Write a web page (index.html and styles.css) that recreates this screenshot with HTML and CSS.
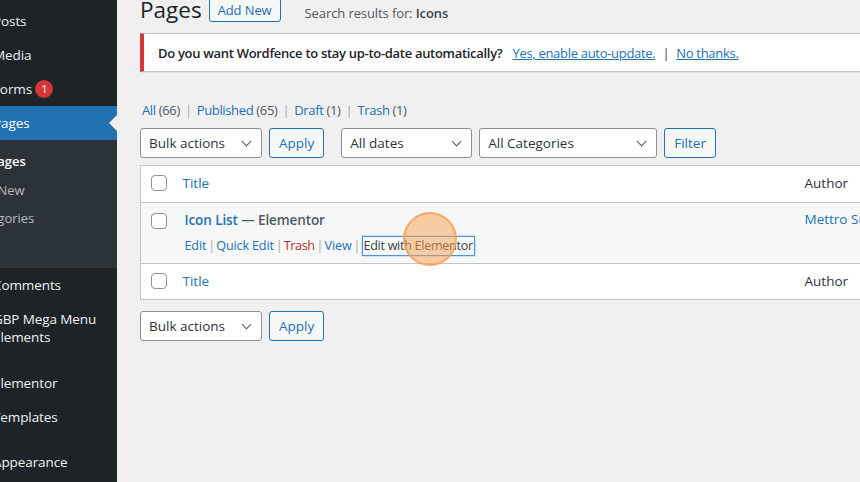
FILE: index.html
```html
<!DOCTYPE html>
<html>
<head>
    <meta charset="UTF-8">
    <title>Pages</title>
    <link rel="stylesheet" href="styles.css">
</head>
<body>
    <div id="adminMenu">
        <ul class="menu">
            <li class="item">Posts</li>
            <li class="item">Media</li>
            <li class="item">Forms <span class="badge">1</span></li>
            <li class="item current">Pages<span class="arrow"></span></li>
        </ul>
        <ul class="submenu">
            <li class="active">All Pages</li>
            <li>Add New</li>
            <li>Categories</li>
        </ul>
        <ul class="menu">
            <li class="item">Comments</li>
            <li class="item tall">GBP Mega Menu<br>Elements</li>
            <li class="sep"></li>
            <li class="item">Elementor</li>
            <li class="item">Templates</li>
            <li class="sep"></li>
            <li class="item">Appearance</li>
        </ul>
    </div>

    <div id="content">
        <div class="header">
            <h1>Pages</h1>
            <a class="addNew">Add New</a>
            <span class="searchInfo">Search results for: <b>Icons</b></span>
        </div>

        <div class="notice">
            <span class="noticeText">Do you want Wordfence to stay up-to-date automatically?</span>
            <a class="link">Yes, enable auto-update.</a>
            <span class="pipe">|</span>
            <a class="link">No thanks.</a>
        </div>

        <ul class="subsubsub">
            <li><a>All</a> <span class="count">(66)</span></li>
            <li class="div">|</li>
            <li><a>Published</a> <span class="count">(65)</span></li>
            <li class="div">|</li>
            <li><a>Draft</a> <span class="count">(1)</span></li>
            <li class="div">|</li>
            <li><a>Trash</a> <span class="count">(1)</span></li>
        </ul>

        <div class="tablenav">
            <div class="select w-bulk">Bulk actions</div>
            <button class="btn">Apply</button>
            <div class="select w-dates gapLeft">All dates</div>
            <div class="select w-cats">All Categories</div>
            <button class="btn">Filter</button>
        </div>

        <table class="list">
            <colgroup>
                <col class="c-cb">
                <col class="c-title">
                <col class="c-author">
            </colgroup>
            <tr class="head">
                <td class="cb"><span class="check"></span></td>
                <td class="title"><a>Title</a></td>
                <td class="author">Author</td>
            </tr>
            <tr class="row">
                <td class="cb"><span class="check"></span></td>
                <td class="title">
                    <div class="rowTitle"><a>Icon List</a> — Elementor</div>
                    <div class="actions">
                        <a>Edit</a><span class="bar">|</span>
                        <a>Quick Edit</a><span class="bar">|</span>
                        <a class="trash">Trash</a><span class="bar">|</span>
                        <a>View</a><span class="bar">|</span>
                        <a class="focus">Edit with Elementor</a>
                    </div>
                </td>
                <td class="author"><a>Mettro Support</a></td>
            </tr>
            <tr class="head foot">
                <td class="cb"><span class="check"></span></td>
                <td class="title"><a>Title</a></td>
                <td class="author">Author</td>
            </tr>
        </table>

        <div class="tablenav bottom">
            <div class="select w-bulk">Bulk actions</div>
            <button class="btn">Apply</button>
        </div>
    </div>

    <div class="clickMark"></div>
</body>
</html>
```

FILE: styles.css
```css
*{
    box-sizing: border-box;
    font-family: "Open Sans", "Noto Sans", sans-serif;
}
body{
    margin: 0;
    width: 860px;
    height: 482px;
    overflow: hidden;
    display: flex;
    background: #f0f0f1;
    color: #3c434a;
    font-size: 13px;
    position: relative;
}
ul{
    margin: 0;
    padding: 0;
    list-style: none;
}
a{
    color: #2271b1;
}

/* admin menu */
#adminMenu{
    width: 117px;
    flex-shrink: 0;
    background: #1d2327;
    overflow: hidden;
    padding-top: 4px;
}
.menu .item{
    position: relative;
    height: 34px;
    line-height: 34px;
    margin-left: -7px;
    color: #f0f0f1;
    font-size: 13.5px;
    letter-spacing: -0.1px;
    white-space: nowrap;
}
.menu .item.tall{
    height: 53px;
    line-height: 18px;
    padding-top: 8px;
}
.menu .sep{
    height: 11px;
}
.menu .current{
    background: #2271b1;
    color: #fff;
    margin-left: 0;
    text-indent: -7px;
}
.arrow{
    position: absolute;
    right: 0;
    top: 9px;
    border-right: 8px solid #f0f0f1;
    border-top: 8px solid transparent;
    border-bottom: 8px solid transparent;
}
.badge{
    display: inline-block;
    width: 18px;
    height: 18px;
    border-radius: 50%;
    background: #d63638;
    color: #fff;
    font-size: 11px;
    line-height: 18px;
    text-align: center;
    text-indent: 0;
    vertical-align: 1px;
}
.submenu{
    background: #2c3338;
    padding: 7px 0;
    height: 128px;
}
.submenu li{
    height: 28.5px;
    line-height: 28px;
    margin-left: -30px;
    color: rgba(240, 246, 252, 0.7);
    font-size: 13px;
    white-space: nowrap;
}
.submenu li.active{
    color: #fff;
    font-weight: 600;
}

/* content */
#content{
    flex: 1;
    padding-left: 23px;
    min-width: 0;
}
.header{
    display: flex;
    align-items: center;
    height: 24px;
    margin-top: -2px;
}
h1{
    margin: 0;
    font-size: 22.5px;
    font-weight: 400;
    color: #1d2327;
    line-height: 24px;
}
.addNew{
    margin-left: 7px;
    border: 1px solid #2271b1;
    border-radius: 3px;
    background: #f6f7f7;
    padding: 0 8px;
    height: 24px;
    line-height: 22px;
    font-size: 13px;
    font-weight: 500;
    letter-spacing: -0.1px;
}
.searchInfo{
    margin-left: 24px;
    margin-top: 5px;
    color: #50575e;
    font-size: 13px;
    letter-spacing: -0.1px;
}
.searchInfo b{
    color: #3c434a;
    font-weight: 600;
}

.notice{
    margin-top: 11px;
    height: 39px;
    width: 740px;
    background: #fff;
    border: 1px solid #c3c4c7;
    border-left: 4px solid #d63638;
    box-shadow: 0 1px 1px rgba(0, 0, 0, 0.04);
    display: flex;
    align-items: center;
    padding-left: 14px;
    font-size: 13px;
    letter-spacing: -0.3px;
}
.noticeText{
    font-weight: 600;
    color: #1d2327;
}
.notice .link{
    margin-left: 10px;
    text-decoration: underline;
}
.notice .pipe{
    margin-left: 7px;
    margin-right: -3px;
    color: #3c434a;
}

.subsubsub{
    display: flex;
    margin-top: 28px;
    padding-left: 2px;
    font-size: 13px;
    letter-spacing: -0.35px;
    color: #646970;
    height: 20px;
    line-height: 20px;
}
.subsubsub .div{
    margin: 0 5px;
    color: #a7aaad;
}
.count{
    color: #50575e;
}

.tablenav{
    display: flex;
    align-items: center;
    margin-top: 8px;
    height: 30px;
}
.tablenav.bottom{
    margin-top: 11px;
}
.select{
    height: 30px;
    border: 1px solid #8c8f94;
    border-radius: 3px;
    background: #fff;
    color: #2c3338;
    font-size: 13.5px;
    line-height: 28px;
    padding-left: 8px;
    position: relative;
    margin-right: 7px;
}
.select::after{
    content: "";
    position: absolute;
    right: 11px;
    top: 9px;
    width: 6px;
    height: 6px;
    border-right: 1.5px solid #50575e;
    border-bottom: 1.5px solid #50575e;
    transform: rotate(45deg);
}
.w-bulk{ width: 122px; }
.w-dates{ width: 131px; }
.w-cats{ width: 178px; }
.gapLeft{ margin-left: 10px; }
.btn{
    height: 30px;
    border: 1px solid #2271b1;
    border-radius: 3px;
    background: #f6f7f7;
    color: #2271b1;
    font-size: 13.5px;
    padding: 0 9px;
}
.tablenav .btn{
    margin-right: 7px;
}

.list{
    margin-top: 7px;
    width: 920px;
    table-layout: fixed;
    border: 1px solid #c3c4c7;
    border-collapse: collapse;
    background: #fff;
    font-size: 13.5px;
}
.c-cb{ width: 42px; }
.c-title{ width: 622px; }
.c-author{ width: 256px; }
.list td{
    padding: 0;
    vertical-align: top;
}
.head{
    height: 37px;
    border-bottom: 1px solid #c3c4c7;
}
.head td{
    vertical-align: middle;
    padding-bottom: 2px;
}
.foot{
    height: 36px;
    border-top: 1px solid #c3c4c7;
    border-bottom: 0;
}
.list .cb{
    padding-left: 10px;
}
.check{
    display: block;
    width: 16px;
    height: 16px;
    border: 1px solid #8c8f94;
    border-radius: 4px;
    background: #fff;
}
.author{
    color: #2c3338;
    white-space: nowrap;
}
.row{
    height: 61px;
    background: #f6f7f7;
}
.list .row .cb{
    padding-top: 10px;
}
.list .row .title{
    padding: 7px 0 0 2px;
}
.list .row .author{
    padding-top: 7px;
}
.rowTitle{
    font-weight: 600;
    color: #50575e;
    line-height: 20px;
    letter-spacing: -0.1px;
}
.actions{
    display: flex;
    gap: 2px;
    margin-top: 7px;
    font-size: 12.6px;
    line-height: 18px;
    color: #a7aaad;
    letter-spacing: -0.15px;
}
.actions .bar{
    width: 6px;
    overflow: hidden;
    text-align: center;
}
.actions .trash{
    color: #b32d2e;
    letter-spacing: -0.4px;
}
.actions .focus{
    margin-left: 1px;
    color: #3c434a;
    box-shadow: 0 0 0 1px #4f94d4, 0 0 2px 1px rgba(79, 148, 212, 0.6);
    padding: 0 1px;
    letter-spacing: -0.3px;
}

.clickMark{
    position: absolute;
    left: 403px;
    top: 212px;
    width: 54px;
    height: 54px;
    border-radius: 50%;
    background: rgba(248, 160, 80, 0.5);
    border: 2px solid rgba(247, 160, 90, 0.85);
}
```
